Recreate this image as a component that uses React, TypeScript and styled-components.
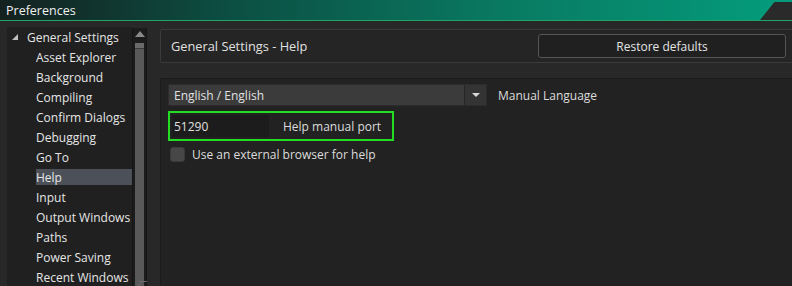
import * as React from "react";
import styled, { createGlobalStyle } from "styled-components";

const Global = createGlobalStyle`
  html, body { margin: 0; padding: 0; background: #282828; }
  body { font-family: "Open Sans", "Noto Sans", sans-serif; font-size: 12px; color: #e0e0e0; }
`;

const Window = styled.div`
  width: 792px;
  height: 286px;
  overflow: hidden;
  background: #282828;
  display: flex;
  flex-direction: column;
`;

const TitleBar = styled.div`
  height: 20px;
  border-bottom: 1px solid #1ea464;
  background: linear-gradient(#049b7b 0 2px, #2a2a2a 2px);
  display: flex;
`;

const TitleFill = styled.div`
  width: 776px;
  height: 20px;
  background: linear-gradient(90deg, #14211f 0%, #0c4f43 30%, #097a62 65%, #049b7b 100%);
  clip-path: polygon(0 0, 100% 0, calc(100% - 16px) 100%, 0 100%);
  display: flex;
  align-items: center;
  padding-left: 6px;
  box-sizing: border-box;
  color: #f0f0f0;
  font-size: 12.5px;
`;

const Body = styled.div`
  flex: 1;
  display: flex;
  padding: 6px 0 0 7px;
  min-height: 0;
`;

const TreeWrap = styled.div`
  display: flex;
  width: 140px;
  flex-shrink: 0;
  position: relative;
`;

const Tree = styled.div`
  width: 125px;
  background: #202020;
`;

const Row = styled.div<{ $selected?: boolean; $indent: number }>`
  height: 16px;
  padding: 2px 0 2px ${(p) => p.$indent}px;
  display: flex;
  align-items: center;
  background: ${(p) => (p.$selected ? "#4b5059" : "transparent")};
  background-clip: content-box;
  color: #e6e6e6;
  white-space: nowrap;
  font-size: 12px;
`;

const Arrow = styled.span`
  width: 0;
  height: 0;
  border-left: 6px solid transparent;
  border-bottom: 6px solid #bfbfbf;
  margin-right: 9px;
`;

const ScrollTrack = styled.div`
  width: 13px;
  margin-top: 1px;
  background: #1c1c1c;
  display: flex;
  flex-direction: column;
  align-items: center;
  border-left: 1px solid #161616;
  border-right: 1px solid #161616;
`;

const ScrollUp = styled.div`
  width: 0;
  height: 0;
  margin-top: 3px;
  border-left: 5px solid transparent;
  border-right: 5px solid transparent;
  border-bottom: 6px solid #8a8a8a;
`;

const Thumb = styled.div`
  width: 9px;
  flex: 1;
  margin-top: 6px;
  background: linear-gradient(#6a6a6a 0 5px, #3a3a3a 5px 6px, #595959 6px);
`;

const Grip = styled.div`
  position: absolute;
  right: 2px;
  bottom: 0;
  width: 8px;
  height: 4px;
  border-top: 1px solid #6a6a6a;
  transform: skewX(-45deg);
  background: linear-gradient(90deg, transparent 3px, #6a6a6a 3px 4px, transparent 4px);
`;

const Main = styled.div`
  flex: 1;
  margin: 2px -2px 0 13px;
  display: flex;
  flex-direction: column;
`;

const Header = styled.div`
  height: 34px;
  box-sizing: border-box;
  border: 1px solid #3a3a3a;
  border-radius: 2px;
  background: #252525;
  display: flex;
  align-items: center;
  justify-content: space-between;
  padding: 0 7px 0 10px;
  font-size: 12.8px;
`;

const Button = styled.div`
  width: 248px;
  height: 24px;
  box-sizing: border-box;
  border: 1px solid #555;
  border-radius: 3px;
  background: #202020;
  display: flex;
  align-items: center;
  justify-content: center;
  color: #e4e4e4;
  font-size: 12px;
`;

const Content = styled.div`
  flex: 1;
  margin-top: 15px;
  border-top: 1px solid #1b1b1b;
  border-left: 1px solid #1b1b1b;
  background: #222;
  padding: 5px 0 0 7px;
  display: flex;
  flex-direction: column;
  gap: 5px;
`;

const Line = styled.div`
  display: flex;
  align-items: center;
  white-space: nowrap;
`;

const Select = styled.div`
  width: 319px;
  height: 22px;
  box-sizing: border-box;
  background: #3b3b3b;
  border: 1px solid #2c2c2c;
  display: flex;
  align-items: center;
  padding-left: 5px;
`;

const SelectText = styled.span`
  flex: 1;
`;

const SelectBtn = styled.div`
  width: 22px;
  height: 20px;
  box-sizing: border-box;
  border-left: 1px solid #262626;
  background: #343434;
  display: flex;
  align-items: center;
  justify-content: center;
  &::after {
    content: "";
    border-left: 4px solid transparent;
    border-right: 4px solid transparent;
    border-top: 4px solid #d8d8d8;
  }
`;

const Label = styled.span<{ $left: number }>`
  margin-left: ${(p) => p.$left}px;
  color: #dcdcdc;
  white-space: nowrap;
`;

const PortBox = styled.div`
  width: 226px;
  height: 30px;
  box-sizing: border-box;
  border: 2px solid #22dd22;
  display: flex;
  align-items: center;
  padding: 2px;
`;

const PortInput = styled.div`
  width: 97px;
  height: 100%;
  background: #1c1c1c;
  display: flex;
  align-items: center;
  padding-left: 2px;
  box-sizing: border-box;
`;

const Check = styled.div`
  width: 15px;
  height: 15px;
  margin-left: 2px;
  border-radius: 3px;
  background: #474747;
  border: 1px solid #3a3a3a;
  box-sizing: border-box;
`;

const items = [
  "Asset Explorer",
  "Background",
  "Compiling",
  "Confirm Dialogs",
  "Debugging",
  "Go To",
  "Help",
  "Input",
  "Output Windows",
  "Paths",
  "Power Saving",
  "Recent Windows",
];

export default function App() {
  return (
    <Window>
      <Global />
      <TitleBar>
        <TitleFill>Preferences</TitleFill>
      </TitleBar>
      <Body>
        <TreeWrap>
          <Tree>
            <Row $indent={5}>
              <Arrow />
              General Settings
            </Row>
            {items.map((it) => (
              <Row key={it} $indent={29} $selected={it === "Help"}>
                {it}
              </Row>
            ))}
          </Tree>
          <ScrollTrack>
            <ScrollUp />
            <Thumb />
          </ScrollTrack>
          <Grip />
        </TreeWrap>
        <Main>
          <Header>
            <span>General Settings - Help</span>
            <Button>Restore defaults</Button>
          </Header>
          <Content>
            <Line>
              <Select>
                <SelectText>English / English</SelectText>
                <SelectBtn />
              </Select>
              <Label $left={11}>Manual Language</Label>
            </Line>
            <Line>
              <PortBox>
                <PortInput>51290</PortInput>
                <Label $left={14}>Help manual port</Label>
              </PortBox>
            </Line>
            <Line>
              <Check />
              <Label $left={7}>Use an external browser for help</Label>
            </Line>
          </Content>
        </Main>
      </Body>
    </Window>
  );
}
